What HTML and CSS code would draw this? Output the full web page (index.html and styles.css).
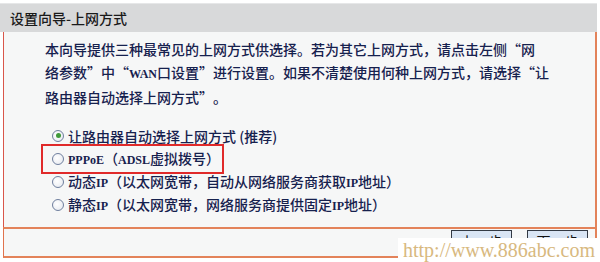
FILE: index.html
```html
<!DOCTYPE html>
<html lang="zh-CN">
<head>
<meta charset="utf-8">
<title>设置向导-上网方式</title>
<link rel="stylesheet" href="styles.css">
</head>
<body>
<div class="wizard">
  <div class="header">设置向导-上网方式</div>
  <div class="content">
    <p class="intro">本向导提供三种最常见的上网方式供选择。若为其它上网方式，请点击左侧<span class="q">“</span>网<br>络参数<span class="q">”</span>中<span class="q">“</span><span class="lat">WAN</span>口设置<span class="q">”</span>进行设置。如果不清楚使用何种上网方式，请选择<span class="q">“</span>让<br>路由器自动选择上网方式<span class="q">”</span>。</p>
    <div class="options">
      <div class="row"><span class="opt"><span class="radio checked"></span><span>让路由器自动选择上网方式 (推荐)</span></span></div>
      <div class="row"><span class="opt hl"><span class="radio"></span><span><span class="lat">PPPoE</span>（<span class="lat">ADSL</span>虚拟拨号）</span></span></div>
      <div class="row"><span class="opt"><span class="radio"></span><span>动态<span class="lat">IP</span>（以太网宽带，自动从网络服务商获取<span class="lat">IP</span>地址）</span></span></div>
      <div class="row"><span class="opt"><span class="radio"></span><span>静态<span class="lat">IP</span>（以太网宽带，网络服务商提供固定<span class="lat">IP</span>地址）</span></span></div>
    </div>
  </div>
  <div class="footer">
    <button class="btn">上一步</button>
    <button class="btn">下一步</button>
  </div>
</div>
<div class="watermark">http://www.886abc.com</div>
</body>
</html>
```

FILE: styles.css
```css
html, body {
  margin: 0;
  padding: 0;
  background: #ffffff;
  width: 600px;
  height: 262px;
  overflow: hidden;
  font-family: "Noto Sans CJK SC", "Noto Sans", sans-serif;
}

.wizard {
  margin-top: 3px;
  width: 597px;
}

.header {
  height: 29px;
  line-height: 29px;
  background: #d8d9da;
  border-top: 1px solid #e6e7e8;
  box-sizing: border-box;
  padding-left: 10px;
  font-size: 14px;
  color: #1a1a1a;
  font-weight: 500;
}

.content {
  margin-left: 3px;
  height: 195px;
  box-sizing: border-box;
  background: #f6f7f7;
  border-left: 1px solid #d9564a;
  border-right: 2px solid #e3835a;
  padding: 6px 10px 0 41px;
  color: #16214e;
  font-size: 14px;
  font-weight: 500;
}

.intro {
  margin: 0;
  line-height: 23px;
  white-space: nowrap;
}

.q {
  display: inline-block;
  width: 14px;
  text-align: right;
}

.q + .q,
.intro br + .q {
  text-align: left;
}

.lat {
  font-family: "Liberation Serif", serif;
  font-weight: bold;
  font-size: 12px;
}

.options {
  margin-top: 15px;
  padding-left: 7px;
}

.row {
  height: 23px;
  display: flex;
  align-items: center;
}

.opt {
  display: inline-flex;
  align-items: center;
  gap: 4px;
  line-height: 22px;
  white-space: nowrap;
}

.hl {
  position: relative;
}

.hl::before {
  content: "";
  position: absolute;
  left: -11px;
  right: -4px;
  top: -3px;
  bottom: -3px;
  border: 2px solid #e02a2a;
}

.radio {
  position: relative;
  width: 10px;
  height: 10px;
  border-radius: 50%;
  border: 1px solid #6f7f9e;
  background: radial-gradient(circle at 40% 40%, #ffffff, #e3e7ee);
  flex: none;
}

.radio.checked::after {
  content: "";
  position: absolute;
  left: 2.5px;
  top: 2.5px;
  width: 5px;
  height: 5px;
  border-radius: 50%;
  background: #3f9a3a;
}

.footer {
  margin-left: 3px;
  height: 31px;
  box-sizing: border-box;
  border: 2px solid #e3835a;
  border-left: 1px solid #e0734e;
  display: flex;
  justify-content: flex-end;
  align-items: flex-start;
  gap: 15px;
  padding: 1px 7px 0 0;
  background: #f6f7f7;
}

.btn {
  width: 61px;
  height: 22px;
  padding: 0;
  font-family: "Noto Sans CJK SC", sans-serif;
  font-size: 14px;
  color: #111;
  background: #d9e5f4;
  border: 1px solid #333a44;
  border-radius: 0;
}

.watermark {
  position: absolute;
  left: 398px;
  top: 238px;
  right: 0;
  bottom: 0;
  background: #ffffff;
  color: #d8b97f;
  font-family: "Liberation Serif", serif;
  font-size: 20px;
  line-height: 24px;
  padding-left: 5px;
}
```
